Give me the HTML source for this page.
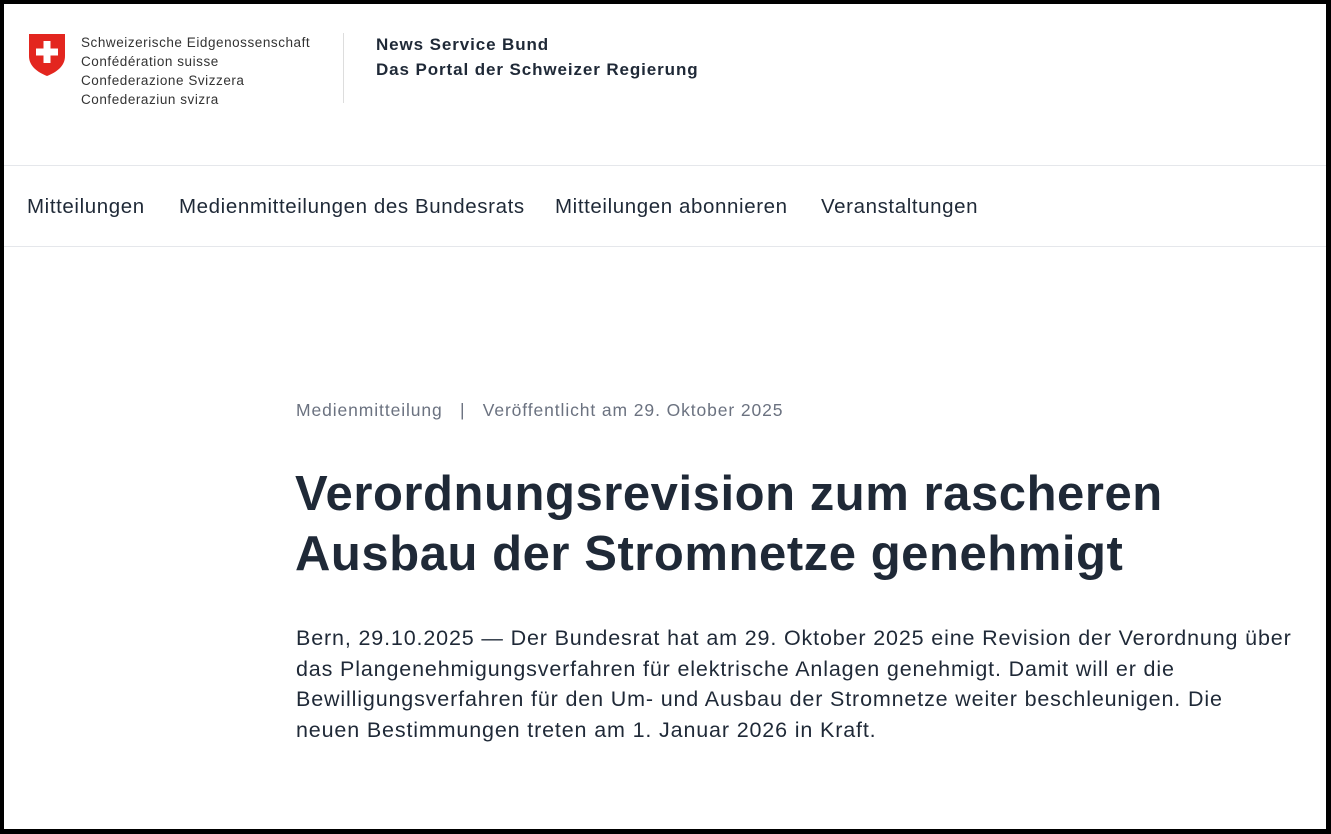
<!DOCTYPE html>
<html><head><meta charset="utf-8"><style>
html,body{margin:0;padding:0;}
body{width:1331px;height:834px;background:#000;position:relative;overflow:hidden;font-family:"Liberation Sans",sans-serif;color:#1f2937;}
.page{position:absolute;left:4px;top:4px;width:1322px;height:825px;background:#fff;overflow:hidden;}
.abs{position:absolute;white-space:nowrap;}
.hr{position:absolute;left:0;width:1322px;height:1px;background:#e5e7eb;}
.nav{font-size:20.5px;line-height:26px;color:#1f2937;letter-spacing:0.6px;top:190px}
</style></head><body><div class="page">
<svg class="abs" style="left:23px;top:28px" width="40" height="45" viewBox="0 0 40 45">
<path d="M2 2 H38 V24 C38 34 30 40 20 44 C10 40 2 34 2 24 Z" fill="#e3261f"/>
<rect x="16.5" y="9" width="7" height="22" fill="#fff"/><rect x="9" y="16.5" width="22" height="7" fill="#fff"/>
</svg>
<div class="abs" style="left:77px;top:29px;font-size:13.5px;line-height:19px;color:#333;letter-spacing:0.55px">Schweizerische Eidgenossenschaft<br>Confédération suisse<br>Confederazione Svizzera<br>Confederaziun svizra</div>
<div class="abs" style="left:339px;top:29px;width:1px;height:70px;background:#ddd"></div>
<div class="abs" style="left:372px;top:28px;font-size:17px;line-height:25px;font-weight:bold;color:#1f2937;letter-spacing:0.9px">News Service Bund<br>Das Portal der Schweizer Regierung</div>
<div class="hr" style="top:161px"></div>
<div class="abs nav" style="left:23px;">Mitteilungen</div>
<div class="abs nav" style="left:175px;">Medienmitteilungen des Bundesrats</div>
<div class="abs nav" style="left:551px;">Mitteilungen abonnieren</div>
<div class="abs nav" style="left:817px;">Veranstaltungen</div>
<div class="hr" style="top:242px"></div>
<div class="abs" style="left:292px;top:394px;font-size:17.5px;line-height:24px;color:#6b7280;letter-spacing:0.9px">Medienmitteilung &nbsp;&nbsp;| &nbsp;&nbsp;Veröffentlicht am 29. Oktober 2025</div>
<div class="abs" style="left:291px;top:460px;font-size:49px;line-height:60px;font-weight:bold;color:#1f2937;letter-spacing:0.55px">Verordnungsrevision zum rascheren<br>Ausbau der Stromnetze genehmigt</div>
<div class="abs" style="left:292px;top:619px;font-size:21.5px;line-height:30.5px;color:#1f2937;letter-spacing:0.85px">Bern, 29.10.2025 — Der Bundesrat hat am 29. Oktober 2025 eine Revision der Verordnung über<br>das Plangenehmigungsverfahren für elektrische Anlagen genehmigt. Damit will er die<br>Bewilligungsverfahren für den Um- und Ausbau der Stromnetze weiter beschleunigen. Die<br>neuen Bestimmungen treten am 1. Januar 2026 in Kraft.</div>
</div></body></html>
